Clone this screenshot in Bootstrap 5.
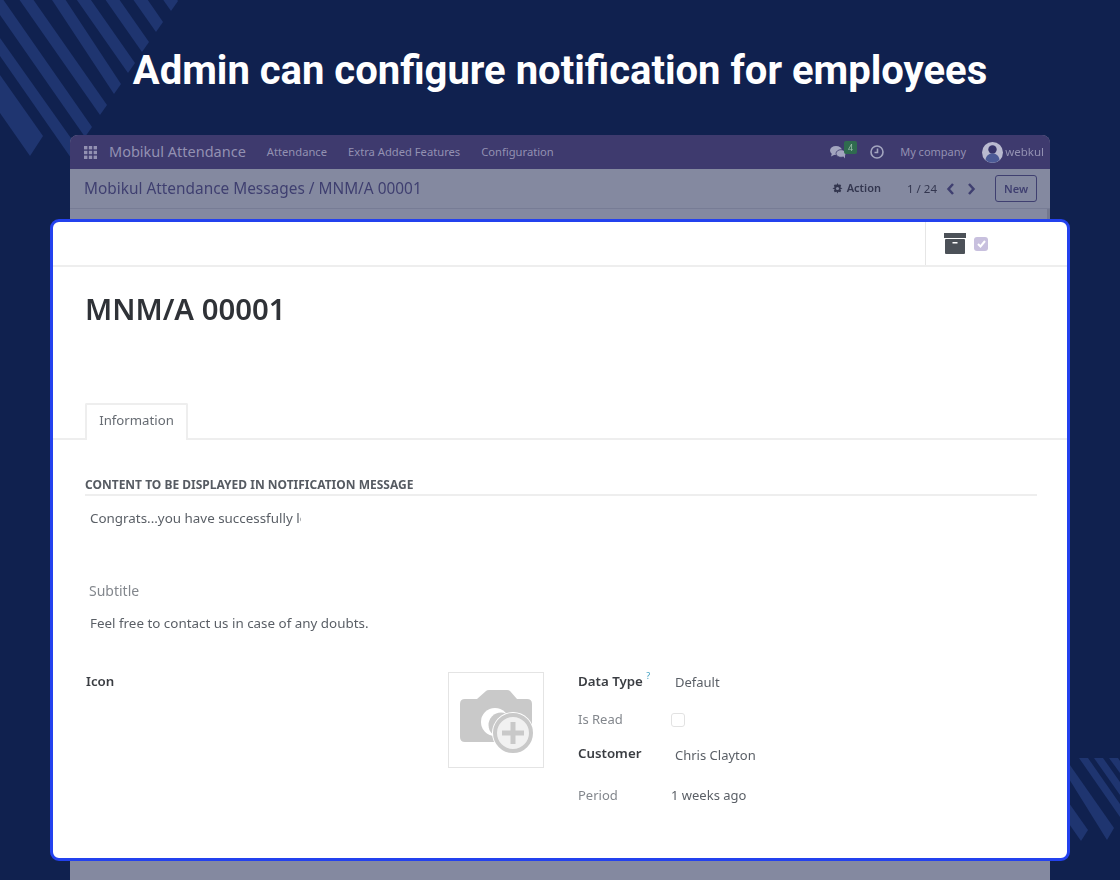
<!DOCTYPE html>
<html lang="en">
<head>
    <meta charset="UTF-8">
    <meta name="viewport" content="width=device-width, initial-scale=1.0">
    <title>Admin can configure notification for employees</title>
    <link href="https://cdn.jsdelivr.net/npm/bootstrap@5.3.0/dist/css/bootstrap.min.css" rel="stylesheet">
    <script src="https://cdn.jsdelivr.net/npm/bootstrap@5.3.0/dist/js/bootstrap.bundle.min.js"></script>

    <style>
        body {
            background: #10214f;
            height: 880px;
            margin: 0;
            overflow: hidden;
            position: relative;
            font-family: "Noto Sans", sans-serif;
        }

        .stripes {
            position: absolute;
            left: 0;
            top: 0;
        }

        .page-title {
            font-family: Roboto, sans-serif;
            font-weight: 700;
            font-size: 40px;
            line-height: 44px;
            color: #fff;
            text-align: center;
            padding-top: 49px;
            margin: 0 0 42px;
            position: relative;
        }

        /* dimmed odoo window behind the card */
        .back-window {
            position: relative;
            margin: 0 70px;
            height: 745px;
            background: #8489a0;
            border-radius: 8px 8px 0 0;
        }

        .back-window::after {
            content: "";
            position: absolute;
            right: 0;
            top: 74px;
            width: 3px;
            height: 12px;
            background: #73788f;
        }

        .window-inner {
            filter: blur(.5px);
        }

        .top-bar {
            height: 34px;
            background: #3e3a6e;
            border-radius: 8px 8px 0 0;
            padding: 0 6px 0 14px;
            color: #9391b2;
            font-size: 11px;
        }

        .brand-name {
            font-size: 14.5px;
            margin: 0 21px 0 12px;
        }

        .top-bar .menu-item {
            font-size: 11.2px;
            margin-right: 21px;
        }

        .user-name {
            font-size: 11.5px;
            margin-left: 2px;
        }

        .msg-count {
            position: absolute;
            left: 774px;
            top: 6px;
            background: #2f6b4f;
            color: #9cc0ac;
            font-size: 9px;
            line-height: 13px;
            width: 13px;
            text-align: center;
            border-radius: 2px;
        }

        .sub-bar {
            height: 40px;
            border-bottom: 1px solid #777c95;
            padding: 0 13px 0 14px;
            color: #3f3f70;
            font-size: 15.4px;
        }

        .action-text {
            font-size: 11px;
            font-weight: 600;
            color: #33364f;
            margin-right: 26px;
        }

        .pager-text {
            font-size: 11.5px;
            color: #33364f;
            margin-right: 9px;
        }

        .pager-arrows {
            margin-right: 19px;
        }

        .new-btn {
            font-size: 11px;
            font-weight: 600;
            color: #3f3f70;
            border: 1px solid #3f3f70;
            border-radius: 3px;
            width: 42px;
            height: 27px;
            line-height: 25px;
            text-align: center;
        }

        /* white card lying over the window */
        .front-card {
            position: absolute;
            left: 50px;
            top: 219px;
            width: 1020px;
            height: 642px;
            background: #fff;
            border: 3px solid #2341ee;
            border-radius: 9px;
            color: #5a5f66;
            font-size: 13px;
        }

        .card-body-soft {
            filter: blur(.35px);
        }

        .card-head {
            height: 45px;
            border-bottom: 2px solid #eeeeee;
        }

        .head-tools {
            margin-left: 872px;
            height: 100%;
            border-left: 1px solid #e6e6e6;
            padding-left: 18px;
            gap: 8px;
        }

        .tick-box {
            width: 14px;
            height: 14px;
            border-radius: 3px;
            background: #c8c0de;
        }

        .rec-name {
            font-size: 29.3px;
            font-weight: 600;
            line-height: 38px;
            color: #2f3237;
            margin: 23px 0 75px 32px;
        }

        .tab-row {
            border-bottom: 2px solid #eeeeee;
            height: 37px;
            padding-left: 32px;
        }

        .tab-item {
            width: 103px;
            height: 37px;
            border: 2px solid #eeeeee;
            border-bottom: 0;
            background: #fff;
            text-align: center;
            line-height: 30px;
            font-size: 13.2px;
            color: #666b72;
            border-radius: 2px 2px 0 0;
        }

        .sect-head {
            margin: 37px 30px 0 32px;
            border-bottom: 2px solid #eeeeee;
            font-size: 12px;
            font-weight: 700;
            line-height: 16px;
            padding-bottom: 1px;
            color: #565b62;
        }

        .msg-clip {
            width: 211px;
            margin: 12px 0 0 37px;
            overflow: hidden;
            white-space: nowrap;
            line-height: 20px;
            font-size: 13.4px;
        }

        .sub-label {
            margin: 53px 0 0 36px;
            line-height: 20px;
            color: #83878d;
            font-size: 14px;
        }

        .sub-value {
            margin: 12px 0 0 37px;
            line-height: 20px;
            font-size: 13.4px;
        }

        .field-area {
            margin: 39px 0 0 33px;
        }

        .field-label {
            font-weight: 600;
            color: #3a3d42;
            font-size: 13.3px;
        }

        .icon-col {
            width: 362px;
            line-height: 20px;
            margin-top: -1px;
        }

        .img-box {
            width: 96px;
            height: 96px;
            border: 1px solid #e4e4e4;
            margin-right: 34px;
        }

        .img-box svg {
            margin-top: 3px;
        }

        .info-line {
            display: flex;
            line-height: 20px;
        }

        .info-line > span:first-child {
            width: 93px;
        }

        .line-read {
            margin-top: 17px;
        }

        .line-customer {
            margin-top: 16px;
        }

        .line-period {
            margin-top: 20px;
        }

        .lift-1 {
            position: relative;
            top: -1px;
        }

        .lift-2 {
            position: relative;
            top: -2px;
        }

        .dim-label {
            color: #83878d;
        }

        .help-mark {
            color: #3f9fc0;
            font-size: 9px;
            vertical-align: 3px;
            font-weight: 400;
        }

        .read-box {
            width: 14px;
            height: 14px;
            border: 1px solid #e2e2e2;
            border-radius: 3px;
            display: block;
            margin-top: 4px;
        }
    </style>
</head>
<body>

    <!-- background stripes -->
    <svg class="stripes" width="1120" height="880" viewBox="0 0 1120 880" fill="#1f3570">
        <path d="M163 22 L156 32 L0 -190 L10 -200 Z"/>
        <path d="M178 1 L171 11 L20 -205 L30 -215 Z"/>
        <path d="M149 42 L142 52 L0 -151 L7 -161 Z"/>
        <path d="M135 63 L128 73 L0 -110 L7 -120 Z"/>
        <path d="M121 84 L114 94 L0 -79 L7 -89 Z"/>
        <path d="M107 105 L100 115 L0 -28 L7 -38 Z"/>
        <path d="M92 127 L85 137 L0 15 L0 -5 Z"/>
        <path d="M78 148 L71 158 L0 56 L0 38 Z"/>
        <path d="M43 136 L30 156 L0 113 L0 75 Z"/>
        <path d="M1088 830 L1081 841 L1000 725 L1007 715 Z"/>
        <path d="M1114 828 L1107 840 L1056 758 L1065 758 Z"/>
        <path d="M1088 758 L1120 804 L1120 817 L1079 758 Z"/>
        <path d="M1103 758 L1120 782 L1120 795 L1094 758 Z"/>
        <path d="M1118 758 L1120 761 L1120 773 L1109 758 Z"/>
    </svg>

    <h1 class="page-title">Admin can configure notification for employees</h1>

    <div class="back-window">
        <div class="window-inner">
            <div class="top-bar d-flex align-items-center">
                <svg width="13" height="13" viewBox="0 0 13 13" fill="#9391b2">
                    <rect x="0" y="0" width="3.4" height="3.4"/><rect x="4.8" y="0" width="3.4" height="3.4"/><rect x="9.6" y="0" width="3.4" height="3.4"/>
                    <rect x="0" y="4.8" width="3.4" height="3.4"/><rect x="4.8" y="4.8" width="3.4" height="3.4"/><rect x="9.6" y="4.8" width="3.4" height="3.4"/>
                    <rect x="0" y="9.6" width="3.4" height="3.4"/><rect x="4.8" y="9.6" width="3.4" height="3.4"/><rect x="9.6" y="9.6" width="3.4" height="3.4"/>
                </svg>
                <span class="brand-name">Mobikul Attendance</span>
                <span class="menu-item">Attendance</span>
                <span class="menu-item">Extra Added Features</span>
                <span class="menu-item">Configuration</span>
                <div class="ms-auto d-flex align-items-center">
                    <svg width="16" height="14" viewBox="0 0 16 14" fill="#a3a5bf" class="me-4">
                        <ellipse cx="6" cy="5.500" rx="6" ry="4.500"/><path d="M2 8L1 11.500 5 9.500z"/>
                        <ellipse cx="11" cy="8.500" rx="5" ry="3.800" stroke="#3e3a6e" stroke-width=".8"/><path d="M13 11l2 2.500V9.500z"/>
                    </svg>
                    <svg width="14" height="14" viewBox="0 0 14 14" fill="none" stroke="#a3a5bf" stroke-width="1.6" class="me-3">
                        <circle cx="7" cy="7" r="6"/><path d="M7.500 3.500V7.500H4.500"/>
                    </svg>
                    <span class="me-3">My company</span>
                    <svg width="21" height="21" viewBox="0 0 21 21">
                        <circle cx="10.500" cy="10.500" r="10.500" fill="#b9bad0"/>
                        <circle cx="10.500" cy="7.500" r="4.200" fill="#36346a"/>
                        <path d="M3.500 18c.5-5 4-6.500 7-6.500s6.500 1.500 7 6.500a10 10 0 0 1-14 0z" fill="#4b5a96"/>
                    </svg>
                    <span class="user-name">webkul</span>
                </div>
            </div>
            <div class="sub-bar d-flex align-items-center">
                <span>Mobikul Attendance Messages / MNM/A 00001</span>
                <div class="ms-auto d-flex align-items-center">
                    <svg width="11" height="11" viewBox="0 0 12 12" fill="#33364f" class="me-1">
                        <path d="M6 0l1 2 2-.5 1 1.500-1 1.700L11.500 6 9 6.800l1 1.700-1 1.500-2-.5-1 2-1-2-2 .5-1-1.500 1-1.700L.5 6 3 4.700 2 3 3 1.500l2 .5z"/>
                        <circle cx="6" cy="6" r="1.700" fill="#8489a0"/>
                    </svg>
                    <span class="action-text">Action</span>
                    <span class="pager-text">1 / 24</span>
                    <svg width="30" height="12" viewBox="0 0 30 12" fill="none" stroke="#3f3f70" stroke-width="2.500" class="pager-arrows">
                        <path d="M7 1L2.500 6 7 11"/><path d="M23 1l4.500 5L23 11"/>
                    </svg>
                    <span class="new-btn">New</span>
                </div>
            </div>
        </div>
        <span class="msg-count">4</span>
    </div>

    <!-- record card -->
    <div class="front-card">
        <div class="card-body-soft">
            <div class="card-head">
                <div class="head-tools d-flex align-items-center">
                    <svg width="22" height="21" viewBox="0 0 22 21">
                        <rect x="0" y="0" width="22" height="5" fill="#4c5158"/>
                        <rect x="1" y="6" width="20" height="15" rx="1" fill="#4c5158"/>
                        <rect x="8.500" y="9" width="5" height="1.500" fill="#fff"/>
                    </svg>
                    <span class="tick-box d-flex align-items-center justify-content-center">
                        <svg width="9" height="8" viewBox="0 0 9 8" fill="none" stroke="#fff" stroke-width="2"><path d="M1 4l2.500 2.500L8 1"/></svg>
                    </span>
                </div>
            </div>

            <div class="rec-name">MNM/A 00001</div>

            <div class="tab-row"><div class="tab-item">Information</div></div>

            <div class="sect-head">CONTENT TO BE DISPLAYED IN NOTIFICATION MESSAGE</div>
            <div class="msg-clip">Congrats...you have successfully logged in</div>
            <div class="sub-label">Subtitle</div>
            <div class="sub-value">Feel free to contact us in case of any doubts.</div>

            <div class="field-area d-flex">
                <div class="icon-col field-label">Icon</div>
                <div class="img-box d-flex align-items-center justify-content-center flex-shrink-0">
                    <svg width="74" height="66" viewBox="0 0 74 66">
                        <path d="M6 10H18L27 2Q28 1 30 1H48Q50 1 51 2L58 10H68Q73 10 73 15V48Q73 53 68 53H6Q1 53 1 48V15Q1 10 6 10Z" fill="#c9c9c9"/>
                        <circle cx="36" cy="33" r="14" fill="#fff"/>
                        <circle cx="42" cy="36" r="12.500" fill="#c9c9c9"/>
                        <circle cx="54" cy="44" r="21" fill="#fff"/>
                        <circle cx="54" cy="44" r="18" fill="#f1f1f1" stroke="#c9c9c9" stroke-width="4"/>
                        <path d="M54 33V55M43 44H65" stroke="#c9c9c9" stroke-width="5"/>
                    </svg>
                </div>
                <div>
                    <div class="info-line"><span class="field-label lift-1">Data Type <sup class="help-mark">?</sup></span><span class="ps-1">Default</span></div>
                    <div class="info-line line-read"><span class="dim-label">Is Read</span><span><i class="read-box"></i></span></div>
                    <div class="info-line line-customer"><span class="field-label lift-2">Customer</span><span class="ps-1">Chris Clayton</span></div>
                    <div class="info-line line-period"><span class="dim-label">Period</span><span>1 weeks ago</span></div>
                </div>
            </div>
        </div>
    </div>

</body>
</html>
